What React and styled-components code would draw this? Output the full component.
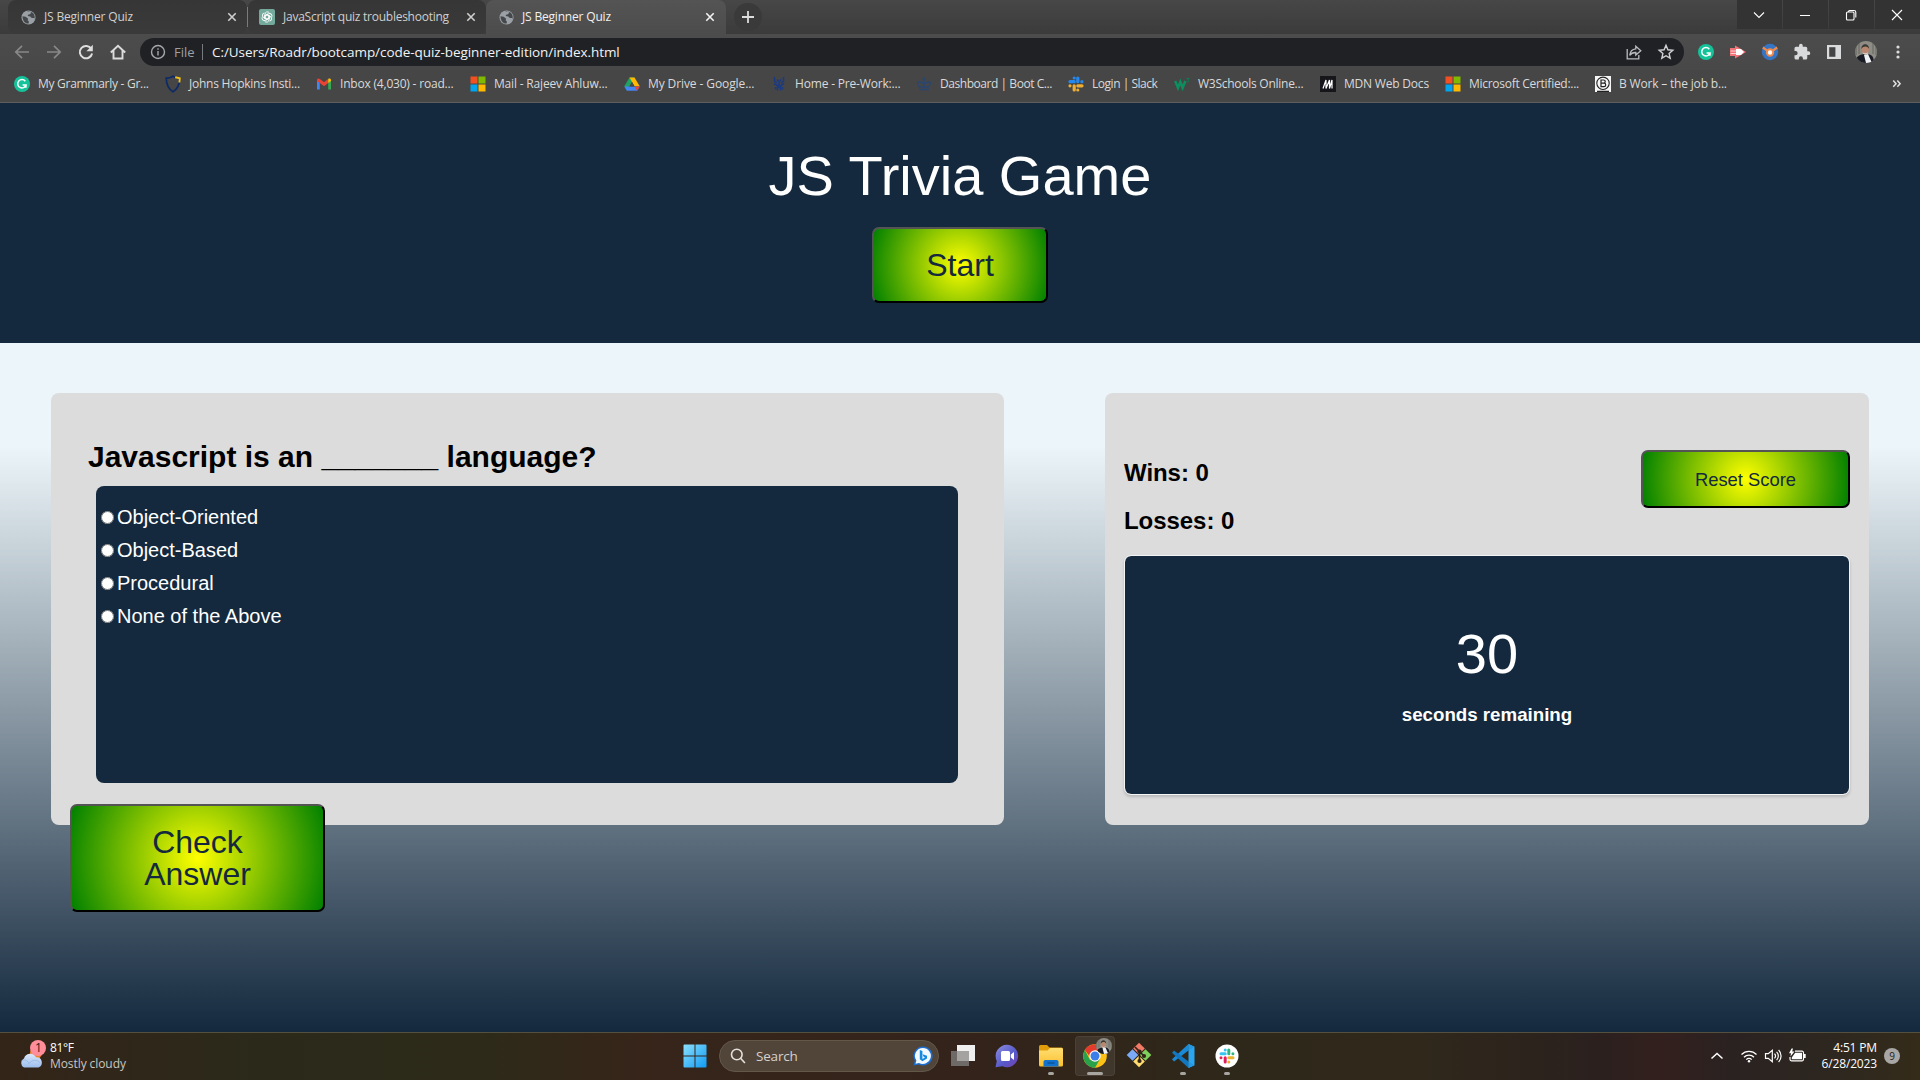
import React from "react";
import styled, { createGlobalStyle } from "styled-components";

const ui = `"Open Sans", "Noto Sans", sans-serif`;
const arial = `"Liberation Sans", Arial, sans-serif`;
const navy = "#14293e";

const GlobalStyle = createGlobalStyle`
  *, *::before, *::after { box-sizing: border-box; }
  html, body { margin: 0; padding: 0; overflow: hidden; }
  svg { display: block; flex: none; }
`;

const Screen = styled.div`
  width: 1920px;
  height: 1080px;
  display: flex;
  flex-direction: column;
  overflow: hidden;
`;

/* ---------- browser window ---------- */

const BrowserChrome = styled.header`
  height: 103px;
  flex: none;
  display: flex;
  flex-direction: column;
  font-family: ${ui};
  background: #484848;
  border-bottom: 1px solid #5f5f5f;
`;

const TabStrip = styled.div`
  height: 34px;
  flex: none;
  display: flex;
  align-items: flex-start;
  padding-left: 8px;
  background: linear-gradient(#474747, #3b3b3b);
`;

const Tab = styled.div`
  width: ${(p) => p.$width}px;
  height: 34px;
  display: flex;
  align-items: center;
  gap: 8px;
  padding: 0 ${(p) => p.$padRight}px 0 ${(p) => p.$padLeft}px;
  border-radius: ${(p) => (p.$active ? "8px 8px 0 0" : "8px")};
  background: ${(p) => (p.$active ? "linear-gradient(#545454, #4c4c4c)" : "linear-gradient(#363636, #3a3a3a)")};
  color: ${(p) => (p.$active ? "#f1f1f1" : "#cfcfcf")};
`;

const TabTitle = styled.span`
  flex: 1;
  font-size: 12px;
  line-height: 16px;
  letter-spacing: ${(p) => p.$spacing}px;
  white-space: nowrap;
`;

const TabDivider = styled.span`
  width: 1px;
  height: 20px;
  margin-top: 7px;
  background: #7b7b7b;
`;

const NewTab = styled.div`
  width: 28px;
  height: 28px;
  margin: 3px 0 0 8px;
  border-radius: 50%;
  display: grid;
  place-items: center;
  background: #3a3a3a;
`;

const WindowControls = styled.div`
  margin-left: auto;
  display: flex;
  gap: 1px;
`;

const WindowButton = styled.div`
  width: 45px;
  height: 29px;
  display: grid;
  place-items: center;
  padding-right: 2px;
  background: #333333;
`;

const Toolbar = styled.div`
  height: 36px;
  flex: none;
  display: flex;
  align-items: center;
  background: linear-gradient(#4c4c4c, #484848);
`;

const NavButtons = styled.div`
  width: 140px;
  padding-left: 6px;
  display: flex;
`;

const ToolSlot = styled.div`
  width: 32px;
  height: 28px;
  display: grid;
  place-items: center;
`;

const AddressBar = styled.div`
  width: 1544px;
  height: 28px;
  display: flex;
  align-items: center;
  padding: 0 2px 0 10px;
  border-radius: 14px;
  background: #202124;
`;

const Scheme = styled.span`
  margin-left: 8px;
  width: 28px;
  font-size: 13px;
  line-height: 18px;
  letter-spacing: 0;
  color: #9aa0a6;
`;

const AddressDivider = styled.span`
  width: 1px;
  height: 16px;
  background: #777b80;
`;

const Url = styled.span`
  flex: 1;
  margin-left: 9px;
  font-size: 13.5px;
  line-height: 18px;
  letter-spacing: -0.06px;
  white-space: nowrap;
  color: #f1f3f4;
`;

const Extensions = styled.div`
  display: flex;
  padding-left: 6px;
`;

const Bookmarks = styled.div`
  height: 32px;
  flex: none;
  display: flex;
  align-items: center;
  padding: 0 18px 4px 14px;
  background: #464646;
`;

const Bookmark = styled.div`
  width: ${(p) => p.$width}px;
  flex: none;
  display: flex;
  align-items: center;
  gap: 8px;
  font-size: 12px;
  line-height: 16px;
  letter-spacing: ${(p) => p.$spacing}px;
  white-space: nowrap;
  color: #dadada;
`;

const Overflow = styled.div`
  margin-left: auto;
`;

/* ---------- quiz page ---------- */

const Page = styled.main`
  flex: 1;
  min-height: 0;
  font-family: ${arial};
  background: linear-gradient(#ecf5f9 0, #ecf5f9 37%, ${navy} 100%);
`;

const Hero = styled.section`
  height: 240px;
  padding-top: 41px;
  display: flex;
  flex-direction: column;
  align-items: center;
  background: ${navy};
`;

const Title = styled.h1`
  margin: 0 0 19px;
  font-size: 56px;
  line-height: 64px;
  font-weight: 400;
  color: #ffffff;
`;

const GameButton = styled.button`
  width: ${(p) => p.$width}px;
  height: ${(p) => p.$height}px;
  flex: none;
  padding: ${(p) => p.$padTop || 0}px ${(p) => p.$padX || 0}px 0;
  border: 2px outset #000;
  border-radius: 7px;
  background: radial-gradient(circle, yellow, green);
  color: ${navy};
  font-family: ${arial};
  font-size: ${(p) => p.$font}px;
  line-height: 1;
`;

const Board = styled.section`
  display: flex;
  justify-content: space-between;
  padding: 50px 51px 0;
`;

const Card = styled.div`
  width: ${(p) => p.$width}px;
  height: 432px;
  border-radius: 8px;
  background: #dcdcdc;
`;

const QuizCard = styled(Card)`
  display: flex;
  flex-direction: column;
  align-items: flex-start;
  padding: 47px 0 0 19px;
`;

const Question = styled.h2`
  margin: 0 0 12px 18px;
  font-size: 30px;
  line-height: 34px;
  font-weight: 700;
  color: #000;
`;

const Choices = styled.div`
  width: 862px;
  height: 297px;
  flex: none;
  margin: 0 0 21px 26px;
  padding: 15px 5px 0;
  border-radius: 8px;
  background: ${navy};
`;

const Choice = styled.label`
  height: 33px;
  display: flex;
  align-items: center;
  gap: 3px;
  font-size: 20px;
  line-height: 33px;
  color: #fff;
`;

const Radio = styled.input`
  width: 13px;
  height: 13px;
  margin: 0;
`;

const ScoreCard = styled(Card)`
  padding: 56px 19px 0;
`;

const ScoreRow = styled.div`
  display: flex;
  justify-content: space-between;
  align-items: flex-start;
  margin-bottom: 10px;
`;

const Score = styled.p`
  margin: 0;
  font-size: 24px;
  line-height: 48px;
  font-weight: 700;
  letter-spacing: -0.05px;
  color: #000;
`;

const ResetWrap = styled.div`
  padding-top: 1px;
`;

const Timer = styled.div`
  height: 240px;
  display: flex;
  flex-direction: column;
  align-items: center;
  padding-top: 66px;
  border: 1px solid #f3f4f5;
  border-radius: 7px;
  background: ${navy};
  background-clip: padding-box;
  box-shadow: 0 2px 3px rgba(0, 0, 0, 0.16);
  color: #fff;
`;

const Count = styled.div`
  font-size: 56px;
  line-height: 64px;
  margin-bottom: 18px;
`;

const Remaining = styled.div`
  font-size: 18.72px;
  line-height: 22px;
  font-weight: 700;
`;

/* ---------- taskbar ---------- */

const Taskbar = styled.footer`
  height: 48px;
  flex: none;
  display: grid;
  grid-template-columns: 670px 1fr auto;
  align-items: center;
  padding-bottom: 1px;
  font-family: ${ui};
  border-top: 1px solid #54503f;
  background: linear-gradient(90deg, #332518 0, #30261a 110px, #2b2a1a 260px, #2d2a19 480px, #37251a 640px, #34241a 800px, #33231a 980px, #30261a 1120px, #2e281a 1240px, #2f281b 1420px, #2b201e 1600px, #33201e 1662px, #2a2221 1730px, #2d2720 1830px, #342b19 1920px);
`;

const Weather = styled.div`
  display: flex;
  align-items: center;
  padding-left: 18px;
  gap: 4px;
`;

const WeatherText = styled.div`
  font-size: 12px;
  line-height: 16px;
  color: ${(p) => (p.$dim ? "#c9c6c0" : "#ffffff")};
  letter-spacing: ${(p) => p.$spacing || 0}px;
`;

const Dock = styled.div`
  display: flex;
  align-items: center;
`;

const DockItem = styled.div`
  width: ${(p) => p.$width || 40}px;
  height: 40px;
  margin-right: ${(p) => (p.$gap === undefined ? 4 : p.$gap)}px;
  display: flex;
  flex-direction: column;
  align-items: center;
  justify-content: flex-end;
  border-radius: 4px;
  background: ${(p) => (p.$active ? "rgba(255,255,255,0.08)" : "transparent")};
  box-shadow: ${(p) => (p.$active ? "inset 0 0 0 1px rgba(255,255,255,0.06)" : "none")};
`;

const Indicator = styled.span`
  width: ${(p) => p.$width}px;
  height: 3px;
  margin: 4px 0 1px;
  border-radius: 2px;
  background: ${(p) => (p.$width ? "#a8a49f" : "transparent")};
`;

const SearchBox = styled.div`
  width: 220px;
  height: 32px;
  margin-right: 4px;
  padding: 0 5px 0 10px;
  display: flex;
  align-items: center;
  border-radius: 16px;
  border: 1px solid #63574a;
  background: #51453a;
  color: #d5d1cc;
  font-size: 13.5px;
  line-height: 18px;
  letter-spacing: -0.2px;
`;

const SearchText = styled.span`
  flex: 1;
  margin-left: 10px;
`;

const Tray = styled.div`
  display: flex;
  align-items: center;
  padding-right: 20px;
`;

const TraySlot = styled.div`
  width: 24px;
  display: grid;
  place-items: center;
  margin-right: ${(p) => p.$gap || 0}px;
`;

const Clock = styled.div`
  width: 68px;
  text-align: right;
  font-size: 12px;
  line-height: 16px;
  letter-spacing: -0.15px;
  color: #fff;
`;

const CountBadge = styled.div`
  width: 16px;
  height: 16px;
  margin-left: 7px;
  border-radius: 50%;
  background: #a9a7a5;
  color: #222;
  font-size: 10px;
  line-height: 16px;
  text-align: center;
`;

/* ---------- drawings ---------- */

const Globe = () => (
  <svg width="15" height="15" viewBox="0 0 16 16">
    <circle cx="8" cy="8" r="7.5" fill="#9aa0a6" />
    <path d="M1.6 6.6 5 7.3l2.6 1.9-.5 1.8 1.3 1.2-.3 2.3C4.2 14.5 1.7 11.5 1.6 6.6ZM6.500 1.900l3.200-.3 1.200 1.300-1.400 1.700-2 .4-.3 1.500 2.700.4 1.600 1.500 2.800.2-.6 2.300c2-3 .6-7.200-2.200-8.500C9.500 1.200 8 1.200 6.500 1.900Z" fill="#45484b" />
  </svg>
);

const GptIcon = () => (
  <svg width="16" height="16" viewBox="0 0 16 16">
    <rect width="16" height="16" rx="2" fill="#74aa9c" />
    <g fill="none" stroke="#fff" strokeWidth="0.9">
      {[0, 60, 120, 180, 240, 300].map((a) => (
        <path key={a} transform={`rotate(${a} 8 8)`} d="M6 9.200V5.200a2.400 2.400 0 0 1 4.300-1.400M6 6.900l2.100-1.300 3 1.700" />
      ))}
    </g>
  </svg>
);

const Close = ({ color }) => (
  <svg width="16" height="16" viewBox="0 0 16 16">
    <path d="m4.300 4.300 7.400 7.400m0-7.400-7.400 7.400" stroke={color} strokeWidth="1.6" />
  </svg>
);

const Stroke = ({ d, size = 16, w = 2, color = "#dcdcdc" }) => (
  <svg width={size} height={size} viewBox="0 0 16 16" fill="none" stroke={color} strokeWidth={w}>
    <path d={d} />
  </svg>
);

const Reload = () => (
  <svg width="18" height="18" viewBox="0 0 18 18">
    <path d="M14.300 5.800A6.200 6.200 0 1 0 15.100 10.500" fill="none" stroke="#dedede" strokeWidth="2" />
    <path d="M15.800 1.800v6.400H9.400Z" fill="#dedede" />
  </svg>
);

const Grammarly = ({ size = 16 }) => (
  <svg width={size} height={size} viewBox="0 0 16 16">
    <circle cx="8" cy="8" r="8" fill="#15c39a" />
    <path d="M11.300 5.200A4.200 4.200 0 1 0 12 8.900H8.600m3.500-.1-.2 2.900" fill="none" stroke="#fff" strokeWidth="1.500" />
  </svg>
);

const Shield = () => (
  <svg width="16" height="18" viewBox="0 0 16 18">
    <path d="M1.200 3.200C4 3.200 6 2.600 8 1.200c2 1.400 4 2 6.800 2-.2 6.600-2 10.600-6.800 13.600C3.200 13.800 1.400 9.800 1.200 3.200Z" fill="none" stroke="#0d2a66" strokeWidth="1.700" />
    <path d="m10.200 2.300 4.600 1-.4 4.200" fill="none" stroke="#f3c11b" strokeWidth="1.900" />
  </svg>
);

const Gmail = () => (
  <svg width="16" height="16" viewBox="0 0 16 16">
    <path d="M1 4v9.500h2.800V7Z" fill="#4285f4" />
    <path d="M15 4v9.500h-2.800V7Z" fill="#34a853" />
    <path d="M1 4.200c0-2 1.700-2.200 2.800-1.300L8 6.200l4.200-3.300L12.200 7 8 10.200 3.800 7 1 4.800Z" fill="#ea4335" />
    <path d="M12.200 2.900C13.300 2 15 2.300 15 4.200v.8L12.200 7Z" fill="#fbbc04" />
  </svg>
);

const Microsoft = () => (
  <svg width="16" height="16" viewBox="0 0 16 16">
    <path d="M.5.5h7v7h-7z" fill="#f25022" />
    <path d="M8.500.5h7v7h-7z" fill="#7fba00" />
    <path d="M.5 8.500h7v7h-7z" fill="#00a4ef" />
    <path d="M8.500 8.500h7v7h-7z" fill="#ffb900" />
  </svg>
);

const Drive = () => (
  <svg width="16" height="16" viewBox="0 0 16 16">
    <path d="M5.500 1.500h5L8 6 3 14.500.3 10.200Z" fill="#1ea362" />
    <path d="M5.500 1.500h5l5.200 8.800h-5.200Z" fill="#ffba00" />
    <path d="M.3 10.400h15.400l-2.600 4.300H2.900Z" fill="#4285f4" />
    <path d="M10.500 10.400h5.200l-2.600 4.300Z" fill="#ea4335" />
    <path d="m8 6 2.500 4.400h-5Z" fill="#484848" />
  </svg>
);

const PreWork = () => (
  <svg width="16" height="16" viewBox="0 0 16 16">
    <path d="M3.500 1v4l2.500 2M12.500 1v4L10 7M3 7.500l3.500 2v5M13 7.500l-3.500 2v5M6 3.500 8 6l2-2.500M8 7v5M4.500 11v2.500M11.500 11v2.500" fill="none" stroke="#1c3a80" strokeWidth="1.600" />
  </svg>
);

const Crown = () => (
  <svg width="16" height="16" viewBox="0 0 16 16">
    <path d="M3 13.500h10M3.600 11C-.5 6.600 2.800 4 6 7.300l2-2.300 2 2.300c3.200-3.300 6.500-.7 2.400 3.700ZM8 1.500V11M6.500 2.800h3" fill="none" stroke="#2a4671" strokeWidth="1.400" />
  </svg>
);

const SlackPieces = ({ c, w = 2.7 }) => (
  <g strokeWidth={w} strokeLinecap="round" fill="none">
    <path d="M6.200 2v0M6.200 5.700H2" stroke={c[0]} />
    <path d="M9.800 2v3.700M13.900 5.700v0" stroke={c[1]} />
    <path d="M9.800 9.800h4.200M9.800 14v0" stroke={c[2]} />
    <path d="M6.200 9.800V14M2 9.800v0" stroke={c[3]} />
  </g>
);

const SlackMark = () => (
  <svg width="16" height="16" viewBox="0 0 16 16">
    <SlackPieces c={["#2588ee", "#2588ee", "#edae33", "#edae33"]} w={3.2} />
  </svg>
);

const W3 = () => (
  <svg width="16" height="16" viewBox="0 0 16 16">
    <path d="m1.200 5 2.800 6.800L6.300 6l2.300 5.800L11.400 5" fill="none" stroke="#0b8f5f" strokeWidth="2.500" />
    <path d="M12.500 2.500h2.500l-1.300 1.700c1.700 0 1.700 2.300-1 1.900" fill="none" stroke="#0a7d54" strokeWidth="1" />
  </svg>
);

const Mdn = () => (
  <svg width="16" height="16" viewBox="0 0 16 16">
    <path d="M0 0h16v16H0z" fill="#15151a" />
    <path d="m3 12.500 3-8.500v8.500L9.500 4v8.500L12 4v8.500" fill="none" stroke="#fff" strokeWidth="1.200" />
  </svg>
);

const BWork = () => (
  <svg width="16" height="16" viewBox="0 0 16 16">
    <path d="M0 0h16v16H0z" fill="#f6f6f6" />
    <circle cx="8" cy="7.300" r="6.200" fill="none" stroke="#222" strokeWidth="1.100" />
    <path d="M6 4h2.600c2.200 0 2.200 3.200 0 3.200H6Zm0 3.200h3c2.300 0 2.300 3.500 0 3.500H6ZM2 15.300h12" fill="none" stroke="#222" strokeWidth="1.200" />
  </svg>
);

const Share = () => (
  <svg width="18" height="18" viewBox="0 0 18 18" fill="none" stroke="#b9bcbf" strokeWidth="1.300">
    <path d="M2.200 6v9.800h11.600V12" />
    <path d="M10.800 3.200 15.800 7.700l-5 4.300V9.500C8 9.400 6 10.300 4.700 12.300 5.100 8.400 7.400 6.200 10.800 5.800Z" />
  </svg>
);

const Star = () => (
  <svg width="18" height="18" viewBox="0 0 18 18">
    <path d="m9 2.300 1.900 4.500 4.900.4-3.700 3.200 1.100 4.800L9 12.700l-4.200 2.500 1.100-4.800-3.700-3.200 4.900-.4Z" fill="none" stroke="#cfd1d3" strokeWidth="1.400" />
  </svg>
);

const RedArrow = () => (
  <svg width="18" height="16" viewBox="0 0 18 16">
    <path d="M1 4h5V1.500L10.500 4 17 8l-6.500 4L6 14.500V12H1Z" fill="#f27478" />
    <path d="M7 5h5l3 3-3 3H7Z" fill="#fff" />
    <path d="M1.500 7H7M1.500 9.500H7" stroke="#fbd3d4" strokeWidth="1" />
  </svg>
);

const BlueBadge = () => (
  <svg width="18" height="18" viewBox="0 0 18 18">
    <circle cx="9" cy="9" r="8.200" fill="#3674c4" />
    <path d="m1.800 4.500 4.700 3.300M16.200 4.500l-4.700 3.300" stroke="#f08a4b" strokeWidth="2.200" />
    <circle cx="9" cy="9.500" r="3.200" fill="#fff" stroke="#f08a4b" strokeWidth="2" />
  </svg>
);

const Puzzle = () => (
  <svg width="18" height="18" viewBox="0 0 24 24" fill="#d9dadb">
    <path d="M20.500 11H19V7a2 2 0 0 0-2-2h-4V3.500a2.500 2.500 0 0 0-5 0V5H4a2 2 0 0 0-2 2v3.800h1.500a2.700 2.700 0 0 1 0 5.400H2V20a2 2 0 0 0 2 2h3.800v-1.500a2.700 2.700 0 0 1 5.400 0V22H17a2 2 0 0 0 2-2v-4h1.500a2.500 2.500 0 0 0 0-5Z" />
  </svg>
);

const SidePanel = () => (
  <svg width="14" height="14" viewBox="0 0 14 14">
    <path d="M0 0h14v14H0z" fill="#dadbdc" />
    <path d="M2.200 2.200h6.200v9.600H2.200z" fill="#444" />
  </svg>
);

const Avatar = ({ size = 22 }) => (
  <svg width={size} height={size} viewBox="0 0 22 22">
    <clipPath id={`face${size}`}>
      <circle cx="11" cy="11" r="11" />
    </clipPath>
    <g clipPath={`url(#face${size})`}>
      <path d="M0 0h22v22H0z" fill="#8d8c85" />
      <path d="M1 0v14M4 0v13M18 0v13M21 0v14" stroke="#64645f" />
      <path d="M0 22c0-6 4-8.500 10-9s9 2 9 9Z" fill="#191c25" />
      <path d="m9 14 4-1 4 9h-6Z" fill="#f0f2f6" />
      <ellipse cx="10.300" cy="8.500" rx="3.600" ry="5" fill="#b98770" />
      <path d="M6.500 8C5.800 1.500 14.500 1.500 14 8c-1-3-5.500-3.500-7.500 0Z" fill="#3a3835" />
      <path d="M7.500 11.500c2 1 4 1 5.800-.2-.5 3-4.700 3.200-5.800.2Z" fill="#d9d4cf" />
    </g>
  </svg>
);

const Dots = () => (
  <svg width="4" height="14" viewBox="0 0 4 14" fill="#dcdcdc">
    <circle cx="2" cy="2" r="1.600" />
    <circle cx="2" cy="7" r="1.600" />
    <circle cx="2" cy="12" r="1.600" />
  </svg>
);

const CloudIcon = () => (
  <svg width="28" height="32" viewBox="0 0 28 32">
    <defs>
      <linearGradient id="cloud" x1="0" y1="0" x2="0" y2="1">
        <stop offset="0" stopColor="#dbe8fa" />
        <stop offset="1" stopColor="#9dbdec" />
      </linearGradient>
    </defs>
    <circle cx="18" cy="13" r="6" fill="#f08228" />
    <path d="M6 27.500a5 5 0 0 1 0-9 6.500 6.500 0 0 1 12-1.200 5.300 5.300 0 0 1 2.500 10.200Z" fill="url(#cloud)" />
    <path d="M3 21.500c3-3 7-1 8 2 3-4 8-4 11-1" fill="none" stroke="#7fa4dc" strokeOpacity=".5" />
    <circle cx="20" cy="8" r="8" fill="#ff8d9a" />
    <text x="20.500" y="12.300" fontSize="12" textAnchor="middle" fontFamily="Open Sans, sans-serif" fill="#1a1a1a">1</text>
  </svg>
);

const WindowsLogo = () => (
  <svg width="24" height="24" viewBox="0 0 24 24">
    <defs>
      <linearGradient id="win" x1="0" y1="0" x2="1" y2="1">
        <stop offset="0" stopColor="#8be0fc" />
        <stop offset="1" stopColor="#0f9af5" />
      </linearGradient>
    </defs>
    <path d="M.5 1.500a1 1 0 0 1 1-1h10v11H.5Zm12-1h10a1 1 0 0 1 1 1v10h-11Zm-12 12h11v11h-10a1 1 0 0 1-1-1Zm12 0h11v10a1 1 0 0 1-1 1h-10Z" fill="url(#win)" />
  </svg>
);

const SearchIcon = () => (
  <svg width="16" height="16" viewBox="0 0 16 16" fill="none" stroke="#e4e0dc" strokeWidth="1.600">
    <circle cx="6.800" cy="6.500" r="5.300" />
    <path d="m10.600 10.300 4.300 4.700" />
  </svg>
);

const Bing = () => (
  <svg width="20" height="20" viewBox="0 0 20 20">
    <path d="M10 .5a9.500 9.500 0 1 1-4.200 18L.5 19.500l1.300-4.800A9.500 9.500 0 0 1 10 .5Z" fill="#1b6fd4" />
    <path d="M10 2a8 8 0 1 1-4 15l-3.500.7.9-3.100A8 8 0 0 1 10 2Z" fill="#f3faff" />
    <path d="M6.800 4v9.300l2.600 1.900 4.600-2.700v-2.800L9.600 8.200l1 2.600 1.400.7-2.600 1.600V5Z" fill="#168ade" />
  </svg>
);

const TaskView = () => (
  <svg width="24" height="24" viewBox="0 0 24 24">
    <path d="M6 1h18v16H6z" fill="#efefef" />
    <path d="M0 7h18v15H0z" fill="#6d6a67" />
    <path d="M6 7h12v10H6z" fill="#a5a3a1" />
  </svg>
);

const Chat = () => (
  <svg width="24" height="24" viewBox="0 0 24 24">
    <defs>
      <linearGradient id="chat" x1="0" y1="0" x2="1" y2="1">
        <stop offset="0" stopColor="#8d8fe0" />
        <stop offset=".6" stopColor="#5558c8" />
        <stop offset="1" stopColor="#7b3fb0" />
      </linearGradient>
    </defs>
    <path d="M12 .8a11.200 11.200 0 1 1-4.500 21.500L.5 23.200l1.300-6.200A11.200 11.200 0 0 1 12 .8Z" fill="url(#chat)" />
    <path d="M6 8.500A1.500 1.500 0 0 1 7.500 7h6A1.500 1.500 0 0 1 15 8.500v7a1.500 1.500 0 0 1-1.500 1.500h-6A1.500 1.500 0 0 1 6 15.500Zm9.800 2L19 8v8l-3.200-2.500Z" fill="#fff" />
  </svg>
);

const Explorer = () => (
  <svg width="24" height="24" viewBox="0 0 24 24">
    <defs>
      <linearGradient id="folder" x1="0" y1="0" x2="0" y2="1">
        <stop offset="0" stopColor="#ffde72" />
        <stop offset="1" stopColor="#fbc02f" />
      </linearGradient>
    </defs>
    <path d="M0 2.500A1.500 1.500 0 0 1 1.500 1H8l2.500 2.500H22.500A1.500 1.500 0 0 1 24 5v5H0Z" fill="#e09c0b" />
    <path d="M0 6.500h8.500L11 4h11.500A1.500 1.500 0 0 1 24 5.500V21a1.500 1.500 0 0 1-1.500 1.500h-21A1.500 1.500 0 0 1 0 21Z" fill="url(#folder)" />
    <path d="M4.500 22.500v-5A1.700 1.700 0 0 1 6.200 16h11.600a1.700 1.700 0 0 1 1.700 1.500v5Z" fill="#1173cd" />
    <path d="M8.500 19h7" stroke="#0a4f94" strokeWidth="1.300" />
  </svg>
);

const ChromeLogo = () => (
  <svg width="34" height="30" viewBox="0 0 34 30">
    <g transform="translate(5 6)">
      <circle cx="12" cy="12" r="11.800" fill="#fbc116" />
      <path d="M1.800 6.100A11.800 11.800 0 0 1 22.200 6.100L12 6.500 8 14Z" fill="#e33b2e" />
      <path d="M1.800 6.100A11.800 11.800 0 0 0 12 23.800l5-8.800-10 1Z" fill="#2aa14b" />
      <circle cx="12" cy="12" r="5.700" fill="#fff" />
      <circle cx="12" cy="12" r="4.500" fill="#3b7de9" />
    </g>
    <g transform="translate(18 0)">
      <Avatar size={16} />
    </g>
  </svg>
);

const Git = () => (
  <svg width="26" height="26" viewBox="0 0 26 26">
    <g transform="rotate(45 13 13)">
      <path d="M4.300 4.300h8.200v8.200H4.300z" fill="#f27b68" />
      <path d="M13.500 4.300h8.200v8.200h-8.200z" fill="#7fcf5c" />
      <path d="M4.300 13.500h8.200v8.200H4.300z" fill="#7baaf7" />
      <path d="M13.500 13.500h8.200v8.200h-8.200z" fill="#ffdc6e" />
    </g>
    <path d="m9 5 4.500 4.500V19M13.500 9.500 18 14" stroke="#312417" strokeWidth="1.700" fill="none" />
    <g fill="#312417">
      <circle cx="13.500" cy="9.500" r="2.100" />
      <circle cx="18" cy="14" r="2.100" />
      <circle cx="13.500" cy="19" r="2.100" />
    </g>
  </svg>
);

const VsCode = () => (
  <svg width="24" height="24" viewBox="0 0 24 24">
    <path d="m17.500 0 6 2.700v18.600l-6 2.700Z" fill="#2ba5ee" />
    <path d="M17.500 0 1 15.200l2 2.300L17.500 6.500Z" fill="#1b8ad6" />
    <path d="M17.500 24 1 8.800l2-2.300 14.500 11Z" fill="#1277bf" />
    <path d="m17.500 17.500 6 3.800-6 2.700ZM17.500 0l6 2.700-6 3.800Z" fill="#2499e2" />
  </svg>
);

const SlackApp = () => (
  <svg width="24" height="24" viewBox="0 0 24 24">
    <circle cx="12" cy="12" r="11.500" fill="#fff" />
    <g transform="translate(4 4)">
      <SlackPieces c={["#36c5f0", "#2eb67d", "#ecb22e", "#e01e5a"]} w={3} />
    </g>
  </svg>
);

const Wifi = () => (
  <svg width="18" height="16" viewBox="0 0 18 16" fill="none" stroke="#fff" strokeWidth="1.300">
    <path d="M1.500 6.500a10.500 10.500 0 0 1 15 0M4 9.200a7 7 0 0 1 10 0M6.300 11.600a3.800 3.800 0 0 1 5.400 0" />
    <circle cx="9" cy="13.200" r="1.200" fill="#fff" stroke="none" />
  </svg>
);

const Speaker = () => (
  <svg width="18" height="16" viewBox="0 0 18 16" fill="none" stroke="#fff" strokeWidth="1.200">
    <path d="M1.500 5.700h2.800l4-3.500v11.600l-4-3.500H1.500ZM10.500 5.700c1.200 1.300 1.200 3.300 0 4.600M12.600 3.800c2.300 2.400 2.300 6 0 8.400M14.600 2c3.300 3.400 3.300 8.600 0 12" />
  </svg>
);

const Battery = () => (
  <svg width="18" height="16" viewBox="0 0 18 16">
    <path d="M7 3.200h7A1.500 1.500 0 0 1 15.500 4.700v6.600a1.500 1.500 0 0 1-1.500 1.500H3.500A1.500 1.500 0 0 1 2 11.300V9" fill="none" stroke="#fff" strokeWidth="1.200" />
    <path d="M7.200 4.800H14v6.400H3.800V9.500Zm8.800 1.200h1.700v4H16ZM3.600.5 1 5.300h2L2.500 8.500 6.500 3.500H4.200l.8-3Z" fill="#fff" />
  </svg>
);

/* ---------- data ---------- */

const bookmarks = [
  { icon: <Grammarly />, label: "My Grammarly - Gr...", width: 151, spacing: -0.28 },
  { icon: <Shield />, label: "Johns Hopkins Insti...", width: 151, spacing: -0.24 },
  { icon: <Gmail />, label: "Inbox (4,030) - road...", width: 154, spacing: -0.2 },
  { icon: <Microsoft />, label: "Mail - Rajeev Ahluw...", width: 154, spacing: -0.18 },
  { icon: <Drive />, label: "My Drive - Google...", width: 147, spacing: -0.1 },
  { icon: <PreWork />, label: "Home - Pre-Work:...", width: 145, spacing: -0.18 },
  { icon: <Crown />, label: "Dashboard | Boot C...", width: 152, spacing: -0.45 },
  { icon: <SlackMark />, label: "Login | Slack", width: 106, spacing: -0.47 },
  { icon: <W3 />, label: "W3Schools Online...", width: 146, spacing: -0.26 },
  { icon: <Mdn />, label: "MDN Web Docs", width: 125, spacing: -0.2 },
  { icon: <Microsoft />, label: "Microsoft Certified:...", width: 150, spacing: -0.28 },
  { icon: <BWork />, label: "B Work – the job b...", width: 140, spacing: -0.18 },
];

const choices = ["Object-Oriented", "Object-Based", "Procedural", "None of the Above"];

const apps = [
  { icon: <TaskView /> },
  { icon: <Chat /> },
  { icon: <Explorer />, dot: 6 },
  { icon: <ChromeLogo />, dot: 16, active: true },
  { icon: <Git /> },
  { icon: <VsCode />, dot: 6 },
  { icon: <SlackApp />, dot: 6 },
];

export default function App() {
  return (
    <Screen>
      <GlobalStyle />
      <BrowserChrome>
        <TabStrip>
          <Tab $width={239} $padLeft={13} $padRight={7}>
            <Globe />
            <TabTitle $spacing={-0.18}>JS Beginner Quiz</TabTitle>
            <Close color="#cfcfcf" />
          </Tab>
          <TabDivider />
          <Tab $width={238} $padLeft={11} $padRight={7}>
            <GptIcon />
            <TabTitle $spacing={-0.25}>JavaScript quiz troubleshooting</TabTitle>
            <Close color="#cfcfcf" />
          </Tab>
          <Tab $width={240} $padLeft={13} $padRight={8} $active>
            <Globe />
            <TabTitle $spacing={-0.18}>JS Beginner Quiz</TabTitle>
            <Close color="#f3f3f3" />
          </Tab>
          <NewTab>
            <Stroke d="M8 2v12M2 8h12" w={1.8} />
          </NewTab>
          <WindowControls>
            <WindowButton><Stroke d="m3 5.500 5 5 5-5" w={1.1} color="#fff" /></WindowButton>
            <WindowButton><Stroke d="M3 8.500h10" w={1} color="#fff" /></WindowButton>
            <WindowButton><Stroke d="M3.500 6a1 1 0 0 1 1-1H10a1 1 0 0 1 1 1v6a1 1 0 0 1-1 1H4.500a1 1 0 0 1-1-1ZM5.500 4.500q0-1 1-1H11q1.800 0 1.800 1.800V10.500" w={1.1} color="#fff" /></WindowButton>
            <WindowButton><Stroke d="m3 3 10 10M13 3 3 13" w={1.1} color="#fff" /></WindowButton>
          </WindowControls>
        </TabStrip>

        <Toolbar>
          <NavButtons>
            <ToolSlot><Stroke d="M15 8H2M8 1.800 1.800 8 8 14.200" w={1.7} color="#888888" /></ToolSlot>
            <ToolSlot><Stroke d="M1 8h13M8 1.800 14.200 8 8 14.200" w={1.7} color="#888888" /></ToolSlot>
            <ToolSlot><Reload /></ToolSlot>
            <ToolSlot><Stroke d="M.8 8.500 8 1.700l7.200 6.800M3.500 6.500v8h9v-8" w={1.9} /></ToolSlot>
          </NavButtons>
          <AddressBar>
            <Stroke d="M8 1.500a6.500 6.500 0 1 1 0 13 6.500 6.500 0 0 1 0-13ZM8 7v4.500M8 4.300v1.500" w={1.4} color="#a5a9ad" />
            <Scheme>File</Scheme>
            <AddressDivider />
            <Url>C:/Users/Roadr/bootcamp/code-quiz-beginner-edition/index.html</Url>
            <ToolSlot><Share /></ToolSlot>
            <ToolSlot><Star /></ToolSlot>
          </AddressBar>
          <Extensions>
            <ToolSlot><Grammarly /></ToolSlot>
            <ToolSlot><RedArrow /></ToolSlot>
            <ToolSlot><BlueBadge /></ToolSlot>
            <ToolSlot><Puzzle /></ToolSlot>
            <ToolSlot><SidePanel /></ToolSlot>
            <ToolSlot><Avatar /></ToolSlot>
            <ToolSlot><Dots /></ToolSlot>
          </Extensions>
        </Toolbar>

        <Bookmarks>
          {bookmarks.map((b) => (
            <Bookmark key={b.label} $width={b.width} $spacing={b.spacing}>
              {b.icon}
              {b.label}
            </Bookmark>
          ))}
          <Overflow>
            <Stroke d="m2 2.500 4.500 5L2 12.500m6.500-10 4.500 5-4.500 5" size={10} w={2.4} color="#e0e0e0" />
          </Overflow>
        </Bookmarks>
      </BrowserChrome>

      <Page>
        <Hero>
          <Title>JS Trivia Game</Title>
          <GameButton $width={176} $height={76} $font={32}>Start</GameButton>
        </Hero>
        <Board>
          <QuizCard $width={953}>
            <Question>Javascript is an _______ language?</Question>
            <Choices>
              {choices.map((c) => (
                <Choice key={c}>
                  <Radio type="radio" name="answer" />
                  {c}
                </Choice>
              ))}
            </Choices>
            <GameButton $width={255} $height={108} $font={32} $padX={60}>Check Answer</GameButton>
          </QuizCard>
          <ScoreCard $width={764}>
            <ScoreRow>
              <div>
                <Score>Wins: 0</Score>
                <Score>Losses: 0</Score>
              </div>
              <ResetWrap>
                <GameButton $width={209} $height={58} $font={18.4} $padTop={3}>Reset Score</GameButton>
              </ResetWrap>
            </ScoreRow>
            <Timer>
              <Count>30</Count>
              <Remaining>seconds remaining</Remaining>
            </Timer>
          </ScoreCard>
        </Board>
      </Page>

      <Taskbar>
        <Weather>
          <CloudIcon />
          <div>
            <WeatherText $spacing={-0.35}>81°F</WeatherText>
            <WeatherText $dim $spacing={-0.08}>Mostly cloudy</WeatherText>
          </div>
        </Weather>
        <Dock>
          <DockItem $width={49} $gap={0}>
            <WindowsLogo />
            <Indicator $width={0} />
          </DockItem>
          <SearchBox>
            <SearchIcon />
            <SearchText>Search</SearchText>
            <Bing />
          </SearchBox>
          {apps.map((a, i) => (
            <DockItem key={i} $active={a.active}>
              {a.icon}
              <Indicator $width={a.dot || 0} />
            </DockItem>
          ))}
        </Dock>
        <Tray>
          <TraySlot $gap={8}><Stroke d="m2.500 10.500 5.500-5 5.500 5" w={1.5} color="#fff" /></TraySlot>
          <TraySlot><Wifi /></TraySlot>
          <TraySlot><Speaker /></TraySlot>
          <TraySlot><Battery /></TraySlot>
          <Clock>
            <div>4:51 PM</div>
            <div>6/28/2023</div>
          </Clock>
          <CountBadge>9</CountBadge>
        </Tray>
      </Taskbar>
    </Screen>
  );
}
